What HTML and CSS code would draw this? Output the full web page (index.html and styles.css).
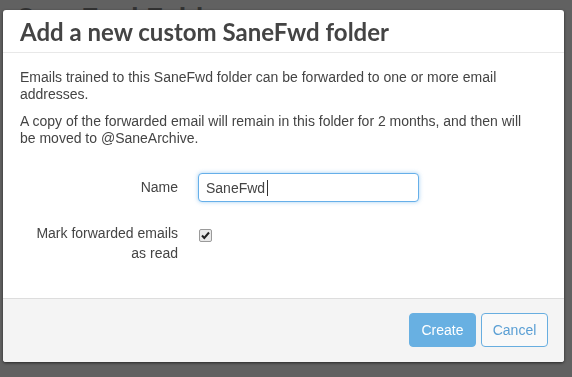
FILE: index.html
```html
<!DOCTYPE html>
<html lang="en">
<head>
  <meta charset="UTF-8">
  <meta name="viewport" content="width=device-width, initial-scale=1.0">
  <title>SaneFwd Folders</title>
  <link rel="stylesheet" href="styles.css">
</head>
<body>

<!-- Page behind the dialog -->
<div class="page">
  <h1 class="page-title">SaneFwd Folders</h1>
</div>

<div class="backdrop"></div>

<!-- New folder dialog -->
<div class="modal">
  <div class="modal-header">
    <h2>Add a new custom SaneFwd folder</h2>
  </div>

  <div class="modal-body">
    <p>Emails trained to this SaneFwd folder can be forwarded to one or more email addresses.</p>
    <p>A copy of the forwarded email will remain in this folder for 2 months, and then will be moved to @SaneArchive.</p>

    <form class="form-grid">
      <label for="folderName" class="form-label">Name</label>
      <div class="field">
        <input type="text" id="folderName" class="form-input is-focused" value="SaneFwd">
        <span class="caret"></span>
      </div>

      <label for="markRead" class="form-label">Mark forwarded emails as read</label>
      <div class="field">
        <input type="checkbox" id="markRead" class="form-check" checked>
      </div>
    </form>
  </div>

  <div class="modal-footer">
    <button class="btn btn-primary">Create</button>
    <button class="btn btn-default">Cancel</button>
  </div>
</div>

</body>
</html>
```

FILE: styles.css
```css
body {
  margin: 0;
  background: #fff;
  font-family: "Liberation Sans", Arial, sans-serif;
  font-size: 14px;
  color: #444;
}
.page {
  padding: 0 17px;
}
.page-title {
  margin: 0;
  padding-top: 3px;
  font-family: Lato, sans-serif;
  font-weight: 700;
  font-size: 30px;
  line-height: 30px;
  color: #888;
}
.backdrop {
  position: fixed;
  top: 0;
  left: 0;
  right: 0;
  bottom: 0;
  background: rgba(0, 0, 0, 0.62);
}
.modal {
  position: absolute;
  top: 10px;
  left: 3px;
  width: 561px;
  background: #fff;
  border-radius: 3px;
  box-shadow: 0 1px 3px rgba(0, 0, 0, 0.6);
  overflow: hidden;
}
.modal-header {
  height: 42px;
  padding: 0 17px;
  border-bottom: 1px solid #e8e8e8;
  display: flex;
  align-items: center;
}
.modal-header h2 {
  margin: 0;
  font-family: Lato, sans-serif;
  font-weight: 700;
  font-size: 24px;
  color: #444;
}
.modal-body {
  padding: 16px 32px 35px 17px;
}
.modal-body p {
  margin: 0 0 10px;
  line-height: 17px;
}
.form-grid {
  display: grid;
  grid-template-columns: 158px 221px;
  column-gap: 20px;
  row-gap: 21px;
  margin-top: 26px;
}
.form-label {
  text-align: right;
  line-height: 20px;
  color: #444;
}
.form-grid .form-label:first-child {
  line-height: 29px;
}
.field {
  position: relative;
}
.form-input {
  display: block;
  box-sizing: border-box;
  width: 221px;
  height: 29px;
  margin: 0;
  padding: 0 7px;
  font-family: "Liberation Sans", Arial, sans-serif;
  font-size: 14px;
  color: #444;
  border: 1px solid #ccc;
  border-radius: 4px;
  outline: none;
}
.form-input.is-focused {
  border-color: #66afe9;
  box-shadow: 0 0 4px rgba(102, 175, 233, 0.6);
}
.caret {
  position: absolute;
  left: 69px;
  top: 7px;
  width: 1px;
  height: 16px;
  background: #333;
}
.form-check {
  appearance: none;
  -webkit-appearance: none;
  display: block;
  box-sizing: border-box;
  width: 13px;
  height: 13px;
  margin: 6px 0 0 1px;
  border: 1px solid #9a9a9a;
  border-radius: 2px;
  background-color: #e9e9e9;
}
.form-check:checked {
  background-image: url("data:image/svg+xml;utf8,<svg xmlns='http://www.w3.org/2000/svg' viewBox='0 0 11 11'><path d='M2 5.5 L4.3 8 L9 2.5' fill='none' stroke='%23222' stroke-width='2'/></svg>");
  background-size: 11px 11px;
  background-repeat: no-repeat;
}
.modal-footer {
  background: #f4f4f4;
  border-top: 1px solid #ddd;
  padding: 14px 16px 15px;
  display: flex;
  justify-content: flex-end;
  gap: 5px;
}
.btn {
  box-sizing: border-box;
  width: 67px;
  height: 34px;
  padding: 0;
  font-family: "Liberation Sans", Arial, sans-serif;
  font-size: 14px;
  border-radius: 4px;
  cursor: pointer;
}
.btn-primary {
  background: #68b0e2;
  border: 1px solid #68b0e2;
  color: #fff;
}
.btn-default {
  background: #f9f9f9;
  border: 1px solid #68aee0;
  color: #5a9fd4;
}
```
